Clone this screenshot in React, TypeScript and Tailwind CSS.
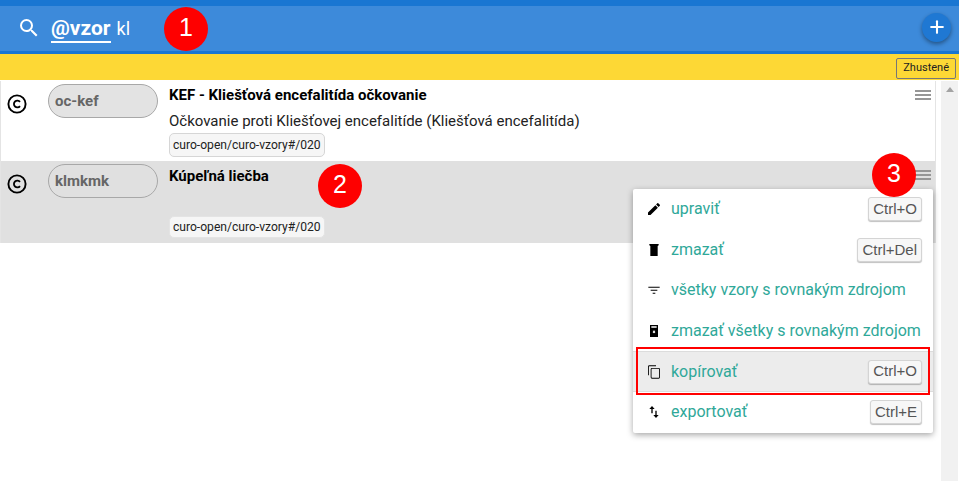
import { Plus } from "lucide-react";

const font = "font-['Roboto',sans-serif]";

function Kbd({ children }: { children: string }) {
  return (
    <span className="ml-auto flex h-[24px] items-center rounded-[3px] border border-[#d4d4d4] bg-[#f7f7f7] px-[4px] font-['Liberation_Sans',sans-serif] text-[15px] text-[#555] shadow-[0_1px_1px_rgba(0,0,0,0.25)]">
      {children}
    </span>
  );
}

function Badge({ n, className }: { n: string; className: string }) {
  return (
    <div
      className={`absolute flex h-[44px] w-[44px] items-center justify-center rounded-full bg-[#fe0000] pb-[3px] font-['Liberation_Sans',sans-serif] text-[25px] text-white ${className}`}
    >
      {n}
    </div>
  );
}

function Copyright() {
  return (
    <svg width="20" height="20" viewBox="0 0 20 20" className="shrink-0">
      <circle cx="10" cy="10" r="8.6" fill="none" stroke="#000" strokeWidth="1.9" />
      <path d="M13 7.9a3.4 3.4 0 1 0 0 4.2" fill="none" stroke="#000" strokeWidth="1.8" />
    </svg>
  );
}

function Hamburger({ className = "" }: { className?: string }) {
  return (
    <div className={`flex w-[16px] flex-col gap-[2px] ${className}`}>
      <div className="h-[2px] bg-[#969696]" />
      <div className="h-[2px] bg-[#969696]" />
      <div className="h-[2px] bg-[#969696]" />
    </div>
  );
}

function Row({
  code,
  title,
  desc,
  active,
}: {
  code: string;
  title: string;
  desc?: string;
  active?: boolean;
}) {
  return (
    <div className={`flex pl-[6px] ${active ? "h-[82px] bg-[#e0e0e0]" : "h-[80px] bg-white"}`}>
      <div className="mt-[13px]">
        <Copyright />
      </div>
      <div
        className={`ml-[21px] mt-[3px] flex h-[34px] w-[110px] shrink-0 items-center rounded-[17px] border border-[#a8a8a8] pl-[6px] text-[15px] font-bold text-[#666] ${
          active ? "" : "bg-[#e3e3e3]"
        }`}
      >
        {code}
      </div>
      <div className="ml-[11px] flex flex-1 flex-col items-start">
        <div className={`h-[20px] text-[15px] font-bold leading-[20px] text-black ${active ? "mt-[5px]" : "mt-[4px]"}`}>
          {title}
        </div>
        <div className="mt-[6px] h-[20px] text-[15px] leading-[20px] text-[#222]">{desc}</div>
        <div
          className={`flex items-center rounded-[5px] border bg-[#f6f6f6] px-[3px] text-[12.1px] text-[#222] ${
            active ? "mt-[4px] h-[22px] border-[#e4e4e4]" : "mt-[2px] h-[24px] border-[#d6d6d6]"
          }`}
        >
          curo-open/curo-vzory#/020
        </div>
      </div>
      <Hamburger className="mr-[4px] mt-[9px]" />
    </div>
  );
}

const icons: Record<string, React.ReactNode> = {
  edit: <path d="M3 17.25V21h3.75L17.81 9.94l-3.75-3.75L3 17.25zM20.71 7.04a1 1 0 0 0 0-1.41l-2.34-2.34a1 1 0 0 0-1.41 0l-1.83 1.83 3.75 3.75 1.83-1.83z" />,
  trash: <path d="M5 3h14v2l-1.500 1v15h-11V6L5 5z" />,
  filter: <path d="M3.500 7h17v1.600h-17zM7 11.500h10v1.600H7zM10 16h4v1.600h-4z" />,
  clear: <path d="M6 3h12v18H6zm2 2v2h8V5zm2 7l1 1.200-1 1.300 1 .9 1-1 1 1 1-.9-1-1.300 1-1.200-1-.9-1 1-1-1z" fillRule="evenodd" />,
  copy: <path d="M15 2H5a2 2 0 0 0-2 2v13h1.300V4a.7.7 0 0 1 .7-.7h10zM19 6H9a2 2 0 0 0-2 2v12a2 2 0 0 0 2 2h10a2 2 0 0 0 2-2V8a2 2 0 0 0-2-2zm.7 14a.7.7 0 0 1-.7.7H9a.7.7 0 0 1-.7-.7V8a.7.7 0 0 1 .7-.7h10a.7.7 0 0 1 .7.7z" />,
  sort: <path d="M9 3L5 7.500h3V14h2V7.500h3zM16 10h-2v6.500h-3l4 4.500 4-4.500h-3z" />,
};

function MenuItem({
  icon,
  label,
  shortcut,
  active,
}: {
  icon: string;
  label: string;
  shortcut?: string;
  active?: boolean;
}) {
  return (
    <div
      className={`flex h-[40.6px] items-center pl-[13px] pr-[11px] ${
        active ? "border-y border-[#dcdcdc] bg-[#ececec]" : ""
      }`}
    >
      <svg width="16" height="16" viewBox="0 0 24 24" fill="#000" className="shrink-0">
        {icons[icon]}
      </svg>
      <span className="ml-[9px] text-[16px] text-[#2fa899]">{label}</span>
      {shortcut && <Kbd>{shortcut}</Kbd>}
    </div>
  );
}

export default function App() {
  return (
    <div className={`relative flex h-[481px] w-[959px] flex-col overflow-hidden bg-white ${font}`}>
      <div className="h-[6px] bg-[#1976d2]" />
      <div className="flex h-[45px] items-center bg-[#3d8ada]">
        <svg width="24" height="24" viewBox="0 0 24 24" fill="#fff" className="mb-[1px] ml-[17px]">
          <path d="M15.500 14h-.79l-.28-.27A6.470 6.470 0 0 0 16 9.500 6.500 6.500 0 1 0 9.500 16c1.610 0 3.090-.59 4.230-1.570l.27.28v.79l5 4.990L20.490 19l-4.990-5zm-6 0C7.010 14 5 11.990 5 9.500S7.010 5 9.500 5 14 7.010 14 9.500 11.990 14 9.500 14z" />
        </svg>
        <div className="ml-[10px] flex items-baseline text-[18px] text-white">
          <span className="border-b-2 border-white text-[21px] font-bold leading-[25px]">@vzor</span>
          <span className="ml-[6px]">kl</span>
        </div>
        <div className="mb-[3px] ml-auto mr-[8px] flex h-[29px] w-[29px] items-center justify-center rounded-full bg-[#1f78d3] shadow-[0_2px_4px_rgba(0,0,0,0.4)]">
          <Plus size={20} strokeWidth={2.5} className="text-white" />
        </div>
      </div>
      <div className="h-[3px] bg-[#1976d2]" />
      <div className="flex h-[26px] items-end justify-end bg-[#fdd835] pb-px pr-[3px]">
        <div className="flex h-[21px] items-center rounded-[2px] border border-[#777] px-[6px] text-[11px] text-[#222]">
          Zhustené
        </div>
      </div>
      <div className="flex flex-1 pt-px">
        <div className="flex-1">
          <div className="w-[936px] border-l border-r border-[#e4e4e4]">
            <Row
              code="oc-kef"
              title="KEF - Kliešťová encefalitída očkovanie"
              desc="Očkovanie proti Kliešťovej encefalitíde (Kliešťová encefalitída)"
            />
            <Row code="klmkmk" title="Kúpeľná liečba" active />
          </div>
        </div>
        <div className="relative mr-px w-[17px] bg-[#f1f1f1]">
          <div className="absolute left-[5px] top-[6px] h-0 w-0 border-x-[4px] border-b-[5px] border-x-transparent border-b-[#a3a3a3]" />
        </div>
      </div>

      {/* context menu */}
      <div className="absolute left-[633px] top-[189px] w-[300px] rounded-[2px] bg-white shadow-[0_2px_6px_rgba(0,0,0,0.35)]">
        <MenuItem icon="edit" label="upraviť" shortcut="Ctrl+O" />
        <MenuItem icon="trash" label="zmazať" shortcut="Ctrl+Del" />
        <MenuItem icon="filter" label="všetky vzory s rovnakým zdrojom" />
        <MenuItem icon="clear" label="zmazať všetky s rovnakým zdrojom" />
        <MenuItem icon="copy" label="kopírovať" shortcut="Ctrl+O" active />
        <MenuItem icon="sort" label="exportovať" shortcut="Ctrl+E" />
      </div>

      {/* annotations */}
      <div className="absolute left-[636px] top-[347px] h-[48px] w-[294px] border-2 border-[#ff0000]" />
      <Badge n="1" className="left-[164px] top-[7px]" />
      <Badge n="2" className="left-[318px] top-[164px]" />
      <Badge n="3" className="left-[872px] top-[153px]" />
    </div>
  );
}
